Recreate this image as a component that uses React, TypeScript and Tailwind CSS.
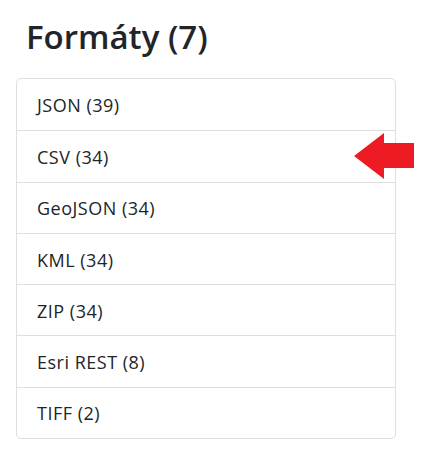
const formats = [
  { name: 'JSON', count: 39 },
  { name: 'CSV', count: 34 },
  { name: 'GeoJSON', count: 34 },
  { name: 'KML', count: 34 },
  { name: 'ZIP', count: 34 },
  { name: 'Esri REST', count: 8 },
  { name: 'TIFF', count: 2 },
]

function ArrowIcon() {
  return (
    <svg width="62" height="48" viewBox="0 0 62 48" className="absolute left-[353px] top-[132px]">
      <polygon points="1,24 31,1 31,11 61,11 61,36 31,36 31,47" fill="#ed1c24" />
    </svg>
  )
}

export default function App() {
  return (
    <div
      className="relative w-[426px] h-[472px] bg-white text-[#212529]"
      style={{ fontFamily: '"Open Sans", "Noto Sans", sans-serif' }}
    >
      <div className="pl-[16px] pr-[30px] pt-[16px]">
        <h2 className="text-[33px] leading-[42px] font-semibold pl-[10px] mb-[20px]">Formáty (7)</h2>
        <ul className="border border-[#dfdfdf] rounded-[5px]">
          {formats.map((f, i) => (
            <li
              key={f.name}
              className={`h-[51.3px] flex items-center px-[20px] pt-[2px] text-[18px] tracking-[0.5px] ${i > 0 ? 'border-t border-[#dfdfdf]' : ''}`}
            >
              {f.name} ({f.count})
            </li>
          ))}
        </ul>
      </div>
      <ArrowIcon />
    </div>
  )
}
